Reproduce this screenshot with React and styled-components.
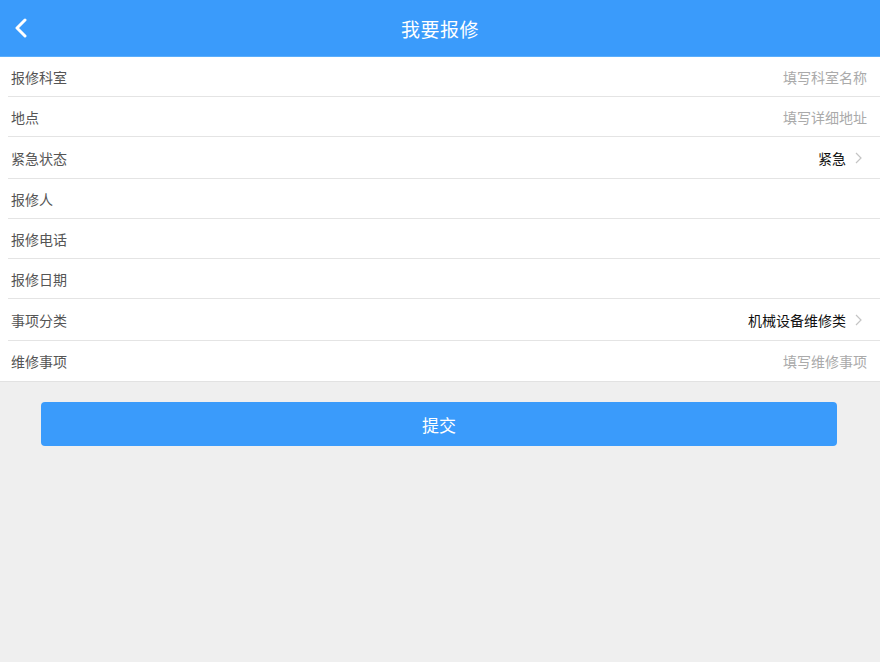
import React from "react";
import styled, { createGlobalStyle } from "styled-components";

const Global = createGlobalStyle`
  html, body { margin: 0; padding: 0; background: #efefef; }
  body { font-family: "Noto Sans CJK SC", "Liberation Sans", sans-serif; }
  * { box-sizing: border-box; }
`;

const Page = styled.div`
  width: 880px;
  height: 662px;
  background: #efefef;
  display: flex;
  flex-direction: column;
`;

const Header = styled.header`
  height: 57px;
  background: #3a9bfb;
  border-bottom: 1px solid #5aaefc;
  display: grid;
  grid-template-columns: 60px 1fr 60px;
  align-items: center;
`;

const BackBtn = styled.button`
  background: none;
  border: 0;
  padding: 0 0 0 14px;
  height: 100%;
  display: flex;
  align-items: center;
  cursor: pointer;
`;

const Title = styled.h1`
  margin: 0;
  text-align: center;
  color: #fff;
  font-size: 19px;
  font-weight: 400;
  letter-spacing: 0.5px;
`;

const Form = styled.div`
  background: #fff;
  display: flex;
  flex-direction: column;
  border-bottom: 1px solid #e2e2e2;
`;

const Row = styled.div`
  height: ${(p) => (p.$tall ? 42 : 40)}px;
  margin-left: 8px;
  padding: 0 13px 0 3px;
  display: flex;
  align-items: center;
  justify-content: space-between;
  border-bottom: ${(p) => (p.$last ? "none" : "1px solid #e4e4e4")};
`;

const Label = styled.span`
  font-size: 14px;
  color: #555;
`;

const Right = styled.span`
  display: flex;
  align-items: center;
  gap: 8px;
  font-size: 14px;
  color: ${(p) => (p.$placeholder ? "#aaa" : "#111")};
  margin-right: ${(p) => (p.$placeholder ? "0" : "4px")};
`;

const ButtonWrap = styled.div`
  padding: 20px 43px 0 41px;
`;

const Submit = styled.button`
  width: 100%;
  height: 44px;
  border: 0;
  border-radius: 4px;
  background: #3a9bfb;
  color: #fff;
  font-family: inherit;
  font-size: 17px;
  cursor: pointer;
`;

const Chevron = () => (
  <svg width="9" height="14" viewBox="0 0 9 14">
    <path d="M2 2 L7 7 L2 12" fill="none" stroke="#c4c4c4" strokeWidth="1.2" />
  </svg>
);

const rows = [
  { label: "报修科室", value: "填写科室名称", placeholder: true },
  { label: "地点", value: "填写详细地址", placeholder: true },
  { label: "紧急状态", value: "紧急", picker: true },
  { label: "报修人" },
  { label: "报修电话" },
  { label: "报修日期" },
  { label: "事项分类", value: "机械设备维修类", picker: true },
  { label: "维修事项", value: "填写维修事项", placeholder: true },
];

export default function App() {
  return (
    <Page>
      <Global />
      <Header>
        <BackBtn aria-label="返回">
          <svg width="14" height="20" viewBox="0 0 14 20">
            <path d="M11 2 L3 10 L11 18" fill="none" stroke="#fff" strokeWidth="3" strokeLinecap="round" strokeLinejoin="round" />
          </svg>
        </BackBtn>
        <Title>我要报修</Title>
        <span />
      </Header>
      <Form>
        {rows.map((r, i) => (
          <Row key={r.label} $tall={r.picker} $last={i === rows.length - 1}>
            <Label>{r.label}</Label>
            {r.value && (
              <Right $placeholder={r.placeholder}>
                {r.value}
                {r.picker && <Chevron />}
              </Right>
            )}
          </Row>
        ))}
      </Form>
      <ButtonWrap>
        <Submit>提交</Submit>
      </ButtonWrap>
    </Page>
  );
}
